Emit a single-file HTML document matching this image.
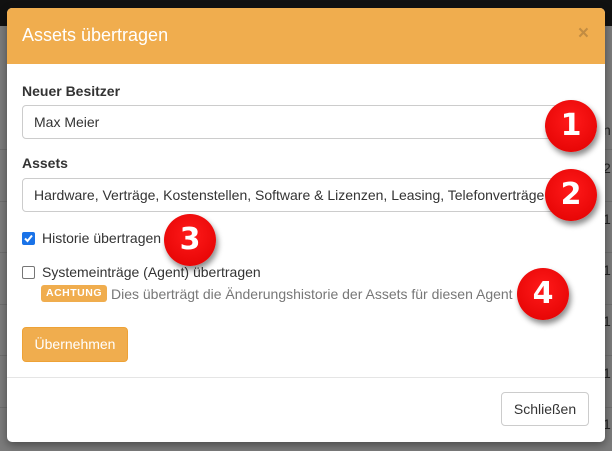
<!DOCTYPE html>
<html><head><meta charset="utf-8"><style>
*{box-sizing:border-box;margin:0;padding:0}
body{width:612px;height:451px;overflow:hidden;background:#7b7b7b;font-family:"Liberation Sans",sans-serif;position:relative}
.top{position:absolute;left:0;top:0;width:612px;height:26px;background:#111}
.hl{position:absolute;left:0;width:612px;height:1px;background:#6e6e6e}
.rt{position:absolute;left:603px;color:#222;font-size:14px}
.modal{position:absolute;left:7px;top:8px;width:598px;height:434px;background:#fff;border-radius:5px;overflow:hidden;box-shadow:0 3px 9px rgba(0,0,0,.4)}
.hd{height:56px;background:#f0ad4e;color:#fff;font-size:18px;padding:17px 15px;position:relative}
.x{position:absolute;right:16px;top:15px;font-size:19px;font-weight:bold;color:#b78540;opacity:.8}
label.l{position:absolute;left:15px;font-weight:bold;font-size:14px;color:#333}
.in{position:absolute;left:15px;width:563px;height:34px;border:1px solid #ccc;border-radius:4px;padding:8px 11px;font-size:14px;color:#333;white-space:nowrap;overflow:hidden}
.cb{position:absolute;left:15px;width:13px;height:13px;border:1px solid #767676;border-radius:2px;background:#fff}
.cb.on{background:#1a73e8;border-color:#1a73e8}
.t{position:absolute;font-size:14px;color:#333}
.badge{position:absolute;left:34px;top:277px;width:66px;height:17px;background:#f0ad4e;color:#fff;font-size:10.5px;font-weight:bold;border-radius:3px;text-align:center;line-height:17px;letter-spacing:.5px}
.btn{position:absolute;left:15px;top:319px;width:106px;height:35px;background:#f0ad4e;border:1px solid #eea236;border-radius:4px;color:#fff;font-size:14px;text-align:center;line-height:33px}
.ft{position:absolute;left:0;top:369px;width:598px;height:1px;background:#e5e5e5}
.cl{position:absolute;left:494px;top:384px;width:88px;height:34px;border:1px solid #ccc;border-radius:4px;font-size:14px;color:#333;text-align:center;line-height:32px}
.c{position:absolute;width:52px;height:52px;border-radius:50%;background:radial-gradient(circle at 50% 40%,#ff1a1a,#e00000);color:#fff;font-weight:bold;font-size:30px;text-align:center;line-height:52px;box-shadow:2px 4px 6px rgba(0,0,0,.45);font-family:"DejaVu Sans","Liberation Sans",sans-serif}
</style></head><body>
<div class="top"></div>
<div class="hl" style="top:149px"></div><div class="hl" style="top:201px"></div><div class="hl" style="top:252px"></div><div class="hl" style="top:304px"></div><div class="hl" style="top:355px"></div><div class="hl" style="top:407px"></div>
<div class="rt" style="top:122px">n</div><div class="rt" style="top:160px">2</div><div class="rt" style="top:211px">1</div><div class="rt" style="top:262px">1</div><div class="rt" style="top:313px">1</div><div class="rt" style="top:365px">1</div><div class="rt" style="top:416px">1</div>
<div class="modal">
<div class="hd">Assets übertragen<span class="x">×</span></div>
<label class="l" style="top:75px">Neuer Besitzer</label>
<div class="in" style="top:97px">Max Meier</div>
<label class="l" style="top:147px">Assets</label>
<div class="in" style="top:170px">Hardware, Verträge, Kostenstellen, Software &amp; Lizenzen, Leasing, Telefonverträge</div>
<div class="cb on" style="top:224px"><svg width="11" height="11" viewBox="0 0 11 11" style="position:absolute;left:0;top:0"><path d="M2 5.5L4.5 8L9 2.5" stroke="#fff" stroke-width="2" fill="none"/></svg></div>
<div class="t" style="left:35px;top:222px">Historie übertragen</div>
<div class="cb" style="top:258px"></div>
<div class="t" style="left:35px;top:256px">Systemeinträge (Agent) übertragen</div>
<div class="badge">ACHTUNG</div>
<div class="t" style="left:104px;top:278px;color:#777">Dies überträgt die Änderungshistorie der Assets für diesen Agent</div>
<div class="btn">Übernehmen</div>
<div class="ft"></div>
<div class="cl">Schließen</div>
</div>
<div class="c" style="left:545px;top:100px">1</div>
<div class="c" style="left:545px;top:169px">2</div>
<div class="c" style="left:164px;top:214px">3</div>
<div class="c" style="left:517px;top:268px">4</div>
</body></html>
